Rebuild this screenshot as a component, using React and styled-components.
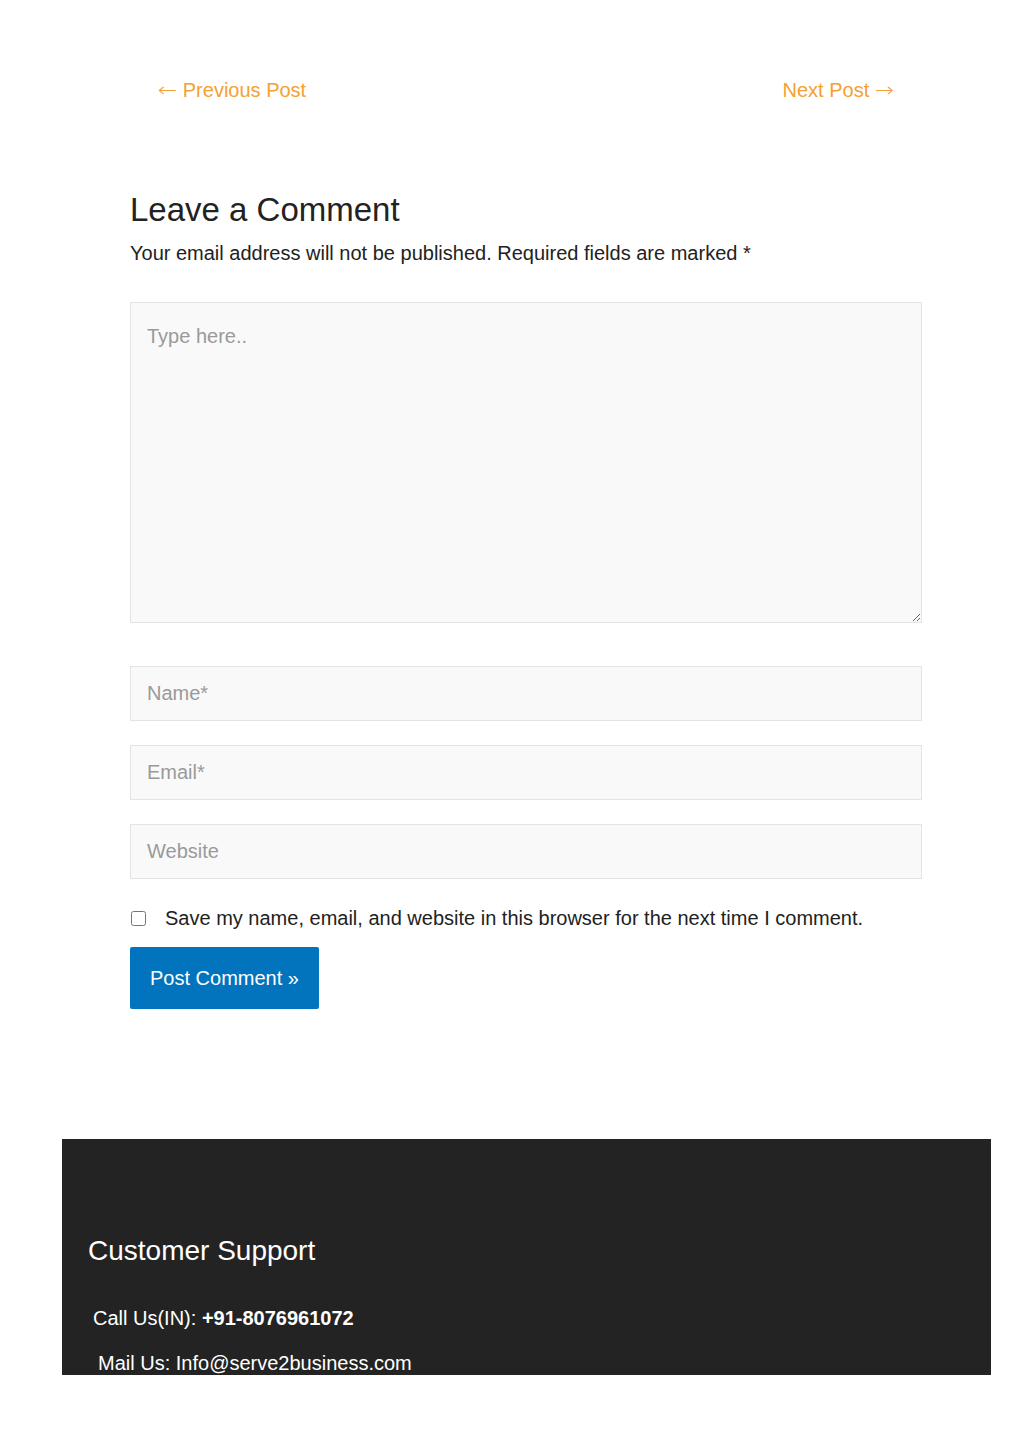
import React from 'react'
import styled, { createGlobalStyle } from 'styled-components'

const GlobalStyle = createGlobalStyle`
  html, body {
    margin: 0;
    padding: 0;
    background: #fff;
    font-family: "Liberation Sans", Arial, sans-serif;
    color: #222;
  }
`

function App() {
  return (
    <Page>
      <GlobalStyle />
      <Content>
        <PostNav>
          <NavLink href="#"><Arrow side="left">←</Arrow>Previous Post</NavLink>
          <NavLink href="#">Next Post<Arrow side="right">→</Arrow></NavLink>
        </PostNav>

        <Heading>Leave a Comment</Heading>
        <Notes>Your email address will not be published. Required fields are marked *</Notes>

        <Form onSubmit={(e) => e.preventDefault()}>
          <TextArea placeholder="Type here.." />
          <Fields>
            <Field placeholder="Name*" />
            <Field placeholder="Email*" />
            <Field placeholder="Website" />
          </Fields>
          <CheckRow>
            <Check type="checkbox" />
            <span>Save my name, email, and website in this browser for the next time I comment.</span>
          </CheckRow>
          <SubmitButton type="submit">Post Comment »</SubmitButton>
        </Form>
      </Content>

      <Footer>
        <FooterTitle>Customer Support</FooterTitle>
        <FooterLine indent={5}>Call Us(IN): <b>+91-8076961072</b></FooterLine>
        <FooterLine indent={10}>Mail Us: Info@serve2business.com</FooterLine>
      </Footer>
    </Page>
  )
}

export default App

const Page = styled.div`
  width: 1024px;
  min-height: 1449px;
  display: flex;
  flex-direction: column;
  align-items: center;
`

const Content = styled.div`
  width: 792px;
  margin-left: 28px;
  display: flex;
  flex-direction: column;
`

const PostNav = styled.nav`
  display: flex;
  justify-content: space-between;
  padding: 77px 27px 0 27px;
`

const NavLink = styled.a`
  color: #f5a032;
  text-decoration: none;
  font-size: 20px;
  line-height: 26px;
`

const Arrow = styled.span`
  display: inline-block;
  font-family: "DejaVu Sans", sans-serif;
  font-weight: 300;
  font-size: 20px;
  transform: scaleX(1.15);
  margin: ${(p) => (p.side === 'left' ? '0 7px 0 2px' : '0 2px 0 7px')};
`

const Heading = styled.h3`
  margin: 87px 0 0;
  font-size: 33px;
  font-weight: 400;
  line-height: 40px;
  color: #222;
`

const Notes = styled.p`
  margin: 10px 0 0;
  font-size: 20px;
  line-height: 26px;
  color: #222;
`

const Form = styled.form`
  display: flex;
  flex-direction: column;
  margin-top: 36px;
`

const inputBase = `
  box-sizing: border-box;
  width: 100%;
  background: #f9f9f9;
  border: 1px solid #e4e4e4;
  border-radius: 0;
  font-family: "Liberation Sans", Arial, sans-serif;
  font-size: 20px;
  color: #333;
  outline: none;
  &::placeholder {
    color: #9a9a9a;
  }
`

const TextArea = styled.textarea`
  ${inputBase}
  height: 321px;
  padding: 20px 16px;
  line-height: 26px;
  resize: vertical;
  display: block;
`

const Fields = styled.div`
  display: flex;
  flex-direction: column;
  gap: 24px;
  margin-top: 43px;
`

const Field = styled.input`
  ${inputBase}
  height: 55px;
  padding: 0 16px;
`

const CheckRow = styled.label`
  display: flex;
  align-items: center;
  gap: 19px;
  margin-top: 26px;
  font-size: 20px;
  line-height: 26px;
  color: #222;
`

const Check = styled.input`
  width: 15px;
  height: 15px;
  margin: 0 0 0 1px;
`

const SubmitButton = styled.button`
  align-self: flex-start;
  margin-top: 16px;
  width: 189px;
  height: 62px;
  background: #0274be;
  color: #fff;
  border: none;
  border-radius: 2px;
  font-family: "Liberation Sans", Arial, sans-serif;
  font-size: 20px;
  cursor: pointer;
`

const Footer = styled.footer`
  box-sizing: border-box;
  width: 929px;
  height: 236px;
  margin-top: 130px;
  margin-left: 29px;
  background: #232323;
  color: #fff;
  padding: 94px 26px 0;
  display: flex;
  flex-direction: column;
`

const FooterTitle = styled.h2`
  margin: 0;
  font-size: 28px;
  font-weight: 400;
  line-height: 36px;
`

const FooterLine = styled.p`
  margin: 0;
  padding-left: ${(p) => p.indent}px;
  font-size: 20px;
  line-height: 26px;
  & + & {
    margin-top: 19px;
  }
  ${FooterTitle} + & {
    margin-top: 36px;
  }
`
